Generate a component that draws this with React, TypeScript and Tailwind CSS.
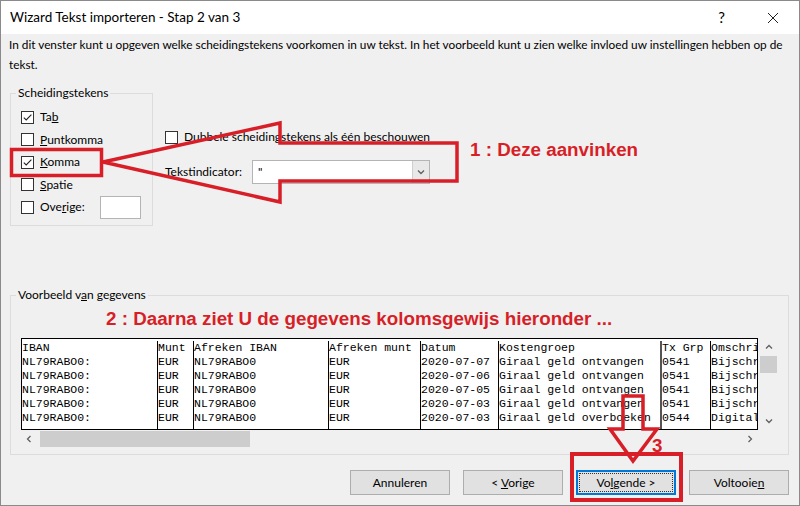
import React from "react";

const RED = "#d81e27";

const Box = ({ checked = false }: { checked?: boolean }) => (
  <span className="w-[13px] h-[13px] border border-[#333333] bg-white flex items-center justify-center shrink-0">
    {checked && (
      <svg width="11" height="11" viewBox="0 0 11 11">
        <path d="M1.8 5.6 L4.2 8 L9.4 2.6" stroke="#222" strokeWidth="1.1" fill="none" />
      </svg>
    )}
  </span>
);

const Check = ({ checked, children }: { checked?: boolean; children: React.ReactNode }) => (
  <div className="h-[22.5px] flex items-center gap-[6px]">
    <Box checked={checked} />
    <span>{children}</span>
  </div>
);

const columns: { w: string; cells: string[] }[] = [
  { w: "w-[135px]", cells: ["IBAN", "NL79RABO0:", "NL79RABO0:", "NL79RABO0:", "NL79RABO0:", "NL79RABO0:"] },
  { w: "w-[36px]", cells: ["Munt", "EUR", "EUR", "EUR", "EUR", "EUR"] },
  { w: "w-[135px]", cells: ["Afreken IBAN", "NL79RABO0", "NL79RABO0", "NL79RABO0", "NL79RABO0", "NL79RABO0"] },
  { w: "w-[92px]", cells: ["Afreken munt", "EUR", "EUR", "EUR", "EUR", "EUR"] },
  { w: "w-[78px]", cells: ["Datum", "2020-07-07", "2020-07-06", "2020-07-05", "2020-07-03", "2020-07-03"] },
  {
    w: "w-[162px]",
    cells: [
      "Kostengroep",
      "Giraal geld ontvangen",
      "Giraal geld ontvangen",
      "Giraal geld ontvangen",
      "Giraal geld ontvangen",
      "Giraal geld overboeken",
    ],
  },
  { w: "w-[50px]", cells: ["Tx Grp", "0541", "0541", "0541", "0541", "0544"] },
  { w: "w-[49px]", cells: ["Omschri", "Bijschr", "Bijschr", "Bijschr", "Bijschr", "Digital"] },
];

const Chevron = ({ d }: { d: string }) => (
  <svg width="10" height="10" viewBox="0 0 10 10">
    <path d={d} stroke="#606060" strokeWidth="1.3" fill="none" />
  </svg>
);

const Button = ({ children, focused }: { children: React.ReactNode; focused?: boolean }) => (
  <div
    className={`w-[100px] h-[25px] flex items-center justify-center bg-[#e1e1e1] border ${
      focused ? "border-[#0078d7] border-2" : "border-[#adadad]"
    }`}
  >
    {focused ? (
      <span className="w-[94px] h-[19px] border border-dotted border-[#333] flex items-center justify-center">
        <span>{children}</span>
      </span>
    ) : (
      <span>{children}</span>
    )}
  </div>
);

const annot = "font-bold font-['Liberation_Sans',Arial,sans-serif] text-[18.8px] leading-[20px]";

export default function App() {
  return (
    <div className="relative w-[800px] h-[506px] overflow-hidden border border-[#8a8a8a] bg-[#f0f0f0] flex flex-col font-['Lato',sans-serif] text-[12px] text-black">
      {/* title bar */}
      <div className="h-[33px] shrink-0 bg-white flex items-center pl-[9px] pr-[20px]">
        <span className="text-[13.5px] flex-1">Wizard Tekst importeren - Stap 2 van 3</span>
        <span className="text-[15px] mr-[42px]">?</span>
        <svg width="12" height="12" viewBox="0 0 12 12">
          <path d="M1 1 L11 11 M11 1 L1 11" stroke="#222" strokeWidth="1" fill="none" />
        </svg>
      </div>

      {/* body */}
      <div className="flex-1 flex flex-col pl-[9px] pr-[10px]">
        <p className="mt-[1px] leading-[20px] text-[11.8px] -ml-[1px] whitespace-nowrap">
          In dit venster kunt u opgeven welke scheidingstekens voorkomen in uw tekst. In het voorbeeld kunt u zien welke
          invloed uw instellingen hebben op de
          <br />
          tekst.
        </p>

        <div className="flex mt-[10px]">
          <fieldset className="w-[143px] h-[141px] border border-[#dcdcdc] pl-[10px] pt-[5px]">
            <legend className="ml-[-5px] px-[2px] leading-[16px]">Scheidingstekens</legend>
            <Check checked>
              Ta<u>b</u>
            </Check>
            <Check>
              <u>P</u>untkomma
            </Check>
            <Check checked>
              <u>K</u>omma
            </Check>
            <Check>
              <u>S</u>patie
            </Check>
            <div className="h-[22.5px] flex items-center">
              <Box />
              <span className="ml-[6px] w-[60px]">
                Ove<u>r</u>ige:
              </span>
              <span className="w-[41px] h-[23px] bg-white border border-[#b4b4b4]" />
            </div>
          </fieldset>

          <div className="ml-[12px] pt-[45px] flex flex-col">
            <div className="h-[14px] flex items-center gap-[6px]">
              <Box />
              <span>Dubbele scheidingstekens als één beschouwen</span>
            </div>
            <div className="mt-[16px] flex items-center">
              <span className="w-[87px]">Tekstindicator:</span>
              <div className="w-[178px] h-[24px] bg-white border border-[#b4b4b4] flex items-center">
                <span className="flex-1 pl-[5px]">"</span>
                <span className="w-[17px] h-full bg-[#e8e8e8] border-l border-[#cfcfcf] flex items-center justify-center">
                  <Chevron d="M2 3.5 L5 6.5 L8 3.5" />
                </span>
              </div>
            </div>
          </div>
        </div>

        <fieldset className="mt-[61px] w-[779px] h-[168px] border border-[#dcdcdc] pl-[10px]">
          <legend className="ml-[-5px] px-[2px] leading-[16px]">
            Voorbeeld v<u>a</u>n gegevens
          </legend>
          <div className={`mt-[6px] ml-[85px] h-[20px] ${annot}`} style={{ color: RED }}>
            2 : Daarna ziet U de gegevens kolomsgewijs hieronder ...
          </div>

          <div className="mt-[9px] grid grid-cols-[737px_21px] grid-rows-[92px_18px]">
            <div className="flex bg-white border border-black font-['Liberation_Mono',monospace] text-[11.5px] leading-[14px] pt-[2px] overflow-hidden">
              {columns.map((c, i) => (
                <div
                  key={i}
                  className={`${c.w} shrink-0 flex flex-col whitespace-pre overflow-hidden ${
                    i > 0 ? (i === 6 ? "border-l-2 border-[#555]" : "border-l border-black") : ""
                  }`}
                >
                  {c.cells.map((t, j) => (
                    <span key={j}>{t}</span>
                  ))}
                </div>
              ))}
            </div>
            <div className="flex flex-col items-center pt-[4px] pb-[4px]">
              <Chevron d="M2 6.5 L5 3.5 L8 6.5" />
              <span className="mt-[4px] w-[17px] h-[17px] bg-[#cdcdcd]" />
              <span className="flex-1" />
              <Chevron d="M2 3.5 L5 6.5 L8 3.5" />
            </div>
            <div className="flex items-center pl-[3px] pr-[3px]">
              <Chevron d="M6.5 2 L3.5 5 L6.5 8" />
              <span className="ml-[6px] w-[210px] h-[16px] bg-[#cdcdcd]" />
              <span className="flex-1" />
              <Chevron d="M3.5 2 L6.5 5 L3.5 8" />
            </div>
            <div />
          </div>
        </fieldset>

        <div className="mt-[15px] flex justify-end gap-[13px]">
          <Button>Annuleren</Button>
          <Button>
            &lt; <u>V</u>orige
          </Button>
          <Button focused>
            Vo<u>l</u>gende &gt;
          </Button>
          <Button>
            Voltooie<u>n</u>
          </Button>
        </div>
      </div>

      {/* red annotations */}
      <svg className="absolute left-[-1px] top-[-1px] pointer-events-none" width="800" height="506" viewBox="0 0 800 506">
        <rect x="11.5" y="149.5" width="90" height="26" stroke={RED} strokeWidth="3.5" fill="none" />
        <polygon
          points="103,162 280,123 280,143 457,143 457,181 280,181 280,202"
          stroke={RED}
          strokeWidth="3.5"
          fill="none"
          strokeLinejoin="miter"
        />
        <rect x="572" y="454" width="109" height="46" stroke={RED} strokeWidth="4" fill="none" />
        <polygon
          points="623,396 643,396 643,429 657,429 633,461 610,429 623,429"
          stroke={RED}
          strokeWidth="3.5"
          fill="none"
        />
      </svg>
      <span className={`absolute left-[469px] top-[139px] ${annot}`} style={{ color: RED }}>
        1 : Deze aanvinken
      </span>
      <span className={`absolute left-[651px] top-[435px] ${annot}`} style={{ color: RED }}>
        3
      </span>
    </div>
  );
}
